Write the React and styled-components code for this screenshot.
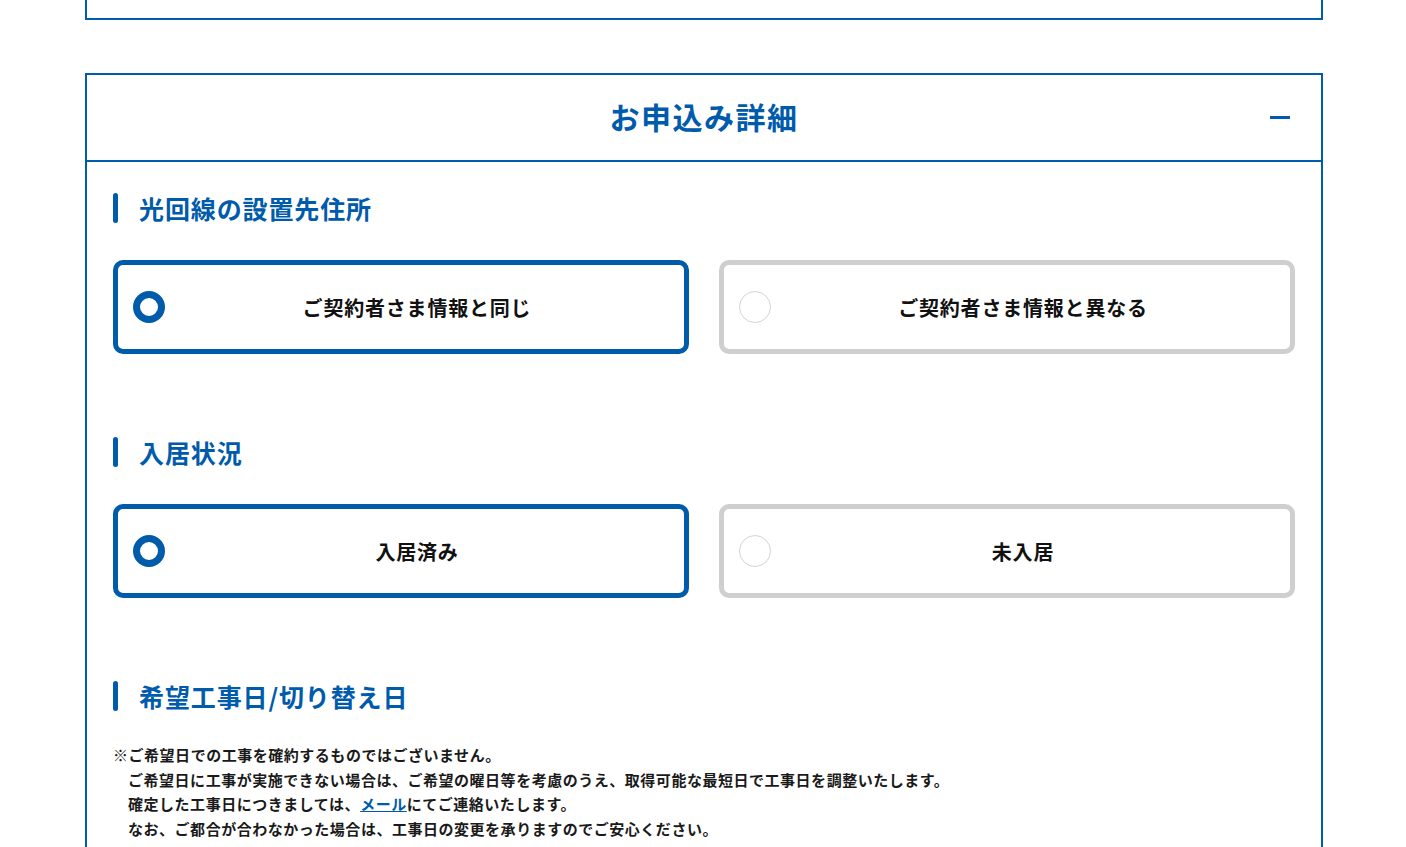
import React, { useState } from 'react'
import styled, { createGlobalStyle } from 'styled-components'

const BLUE = '#005bab'

const GlobalStyle = createGlobalStyle`
	* { box-sizing: border-box; }
	body {
		margin: 0;
		background: #fff;
		font-family: "Noto Sans CJK JP", "Noto Sans", sans-serif;
		color: #111;
		letter-spacing: 0.03em;
	}
`

const Page = styled.div`
	padding: 0 83px 0 85px;
`

const PrevPanel = styled.div`
	height: 20px;
	border: 2px solid ${BLUE};
	border-top: none;
	margin-bottom: 53px;
`

const Panel = styled.section`
	border: 2px solid ${BLUE};
	border-bottom: none;
`

const PanelHeader = styled.header`
	position: relative;
	height: 87px;
	padding-bottom: 4px;
	display: flex;
	align-items: center;
	justify-content: center;
	border-bottom: 2px solid ${BLUE};
`

const PanelTitle = styled.h2`
	margin: 0;
	font-size: 30px;
	font-weight: 700;
	letter-spacing: 0.05em;
	color: ${BLUE};
	line-height: 1;
`

const Toggle = styled.button`
	position: absolute;
	right: 31px;
	top: 41px;
	width: 20px;
	height: 3px;
	padding: 0;
	border: none;
	background: ${BLUE};
	cursor: pointer;
`

const PanelBody = styled.div`
	padding: 31px 26px 60px;
`

const Section = styled.div`
	& + & {
		margin-top: 83px;
	}
`

const Heading = styled.h3`
	position: relative;
	margin: 0;
	padding-left: 26px;
	height: 30px;
	line-height: 30px;
	font-size: 25px;
	font-weight: 700;
	letter-spacing: 0.035em;
	color: ${BLUE};

	&::before {
		content: "";
		position: absolute;
		left: 0;
		top: 0;
		width: 5px;
		height: 30px;
		border-radius: 3px;
		background: ${BLUE};
	}
`

const Choices = styled.div`
	margin-top: 37px;
	display: grid;
	grid-template-columns: 1fr 1fr;
	gap: 30px;
`

const Choice = styled.label`
	display: flex;
	align-items: center;
	height: 94px;
	padding: 0 15px 0 15px;
	border: 5px solid ${p => (p.$checked ? BLUE : '#cfcfcf')};
	border-radius: 10px;
	background: #fff;
	cursor: pointer;
`

const Dot = styled.span`
	flex: none;
	width: 32px;
	height: 32px;
	border-radius: 50%;
	border: ${p => (p.$checked ? `7px solid ${BLUE}` : '1px solid #d4d4d4')};
	background: #fff;
`

const ChoiceText = styled.span`
	flex: 1;
	text-align: center;
	font-size: 20px;
	font-weight: 700;
	letter-spacing: 0.04em;
	color: #111;
`

const Notes = styled.div`
	margin-top: 32px;
	font-size: 15px;
	font-weight: 700;
	line-height: 24.5px;
	letter-spacing: 0.035em;
	color: #1a1a1a;
`

const NoteLine = styled.p`
	margin: 0;
	padding-left: ${p => (p.$indent ? '1em' : '0')};
`

const MailLink = styled.a`
	color: ${BLUE};
	text-decoration: underline;
`

function RadioGroup({ options, value, onChange }) {
	return (
		<Choices>
			{options.map(opt => (
				<Choice key={opt} $checked={value === opt} onClick={() => onChange(opt)}>
					<Dot $checked={value === opt} />
					<ChoiceText>{opt}</ChoiceText>
				</Choice>
			))}
		</Choices>
	)
}

export default function App() {
	const [address, setAddress] = useState('ご契約者さま情報と同じ')
	const [residence, setResidence] = useState('入居済み')

	return (
		<Page>
			<GlobalStyle />
			<PrevPanel />
			<Panel>
				<PanelHeader>
					<PanelTitle>お申込み詳細</PanelTitle>
					<Toggle aria-label="閉じる" />
				</PanelHeader>
				<PanelBody>
					<Section>
						<Heading>光回線の設置先住所</Heading>
						<RadioGroup
							options={['ご契約者さま情報と同じ', 'ご契約者さま情報と異なる']}
							value={address}
							onChange={setAddress}
						/>
					</Section>
					<Section>
						<Heading>入居状況</Heading>
						<RadioGroup
							options={['入居済み', '未入居']}
							value={residence}
							onChange={setResidence}
						/>
					</Section>
					<Section>
						<Heading>希望工事日/切り替え日</Heading>
						<Notes>
							<NoteLine>※ご希望日での工事を確約するものではございません。</NoteLine>
							<NoteLine $indent>ご希望日に工事が実施できない場合は、ご希望の曜日等を考慮のうえ、取得可能な最短日で工事日を調整いたします。</NoteLine>
							<NoteLine $indent>確定した工事日につきましては、<MailLink href="#">メール</MailLink>にてご連絡いたします。</NoteLine>
							<NoteLine $indent>なお、ご都合が合わなかった場合は、工事日の変更を承りますのでご安心ください。</NoteLine>
						</Notes>
					</Section>
				</PanelBody>
			</Panel>
		</Page>
	)
}
